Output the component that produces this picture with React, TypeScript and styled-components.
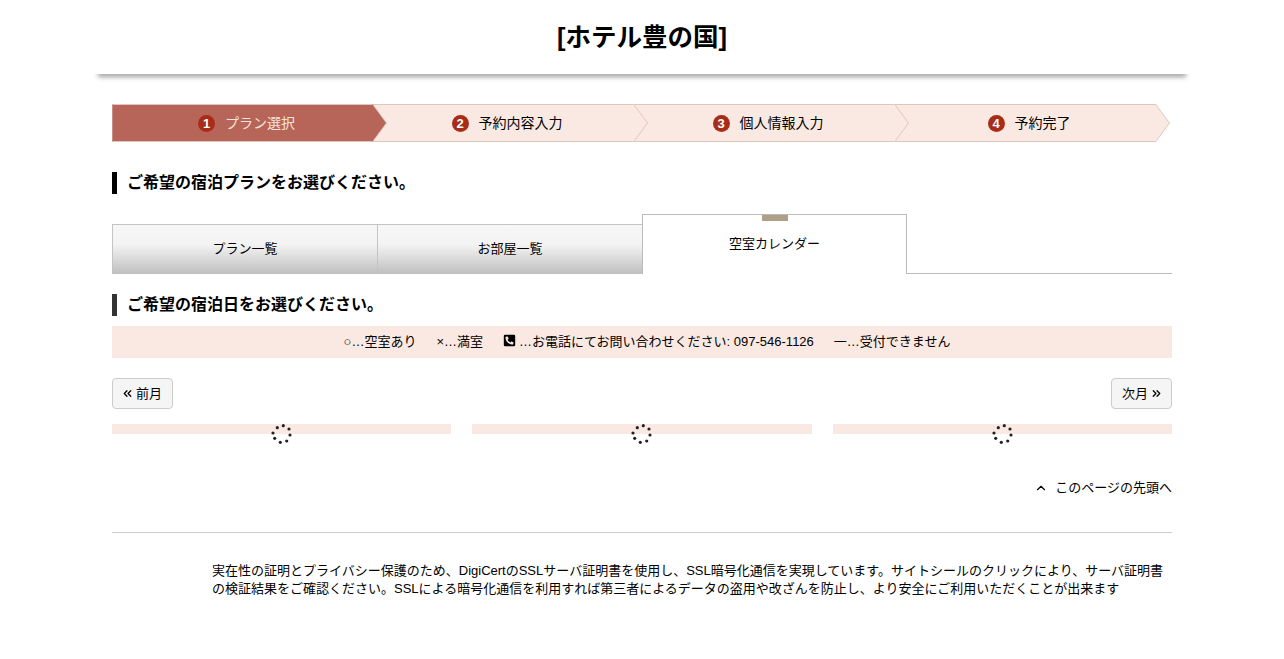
import styled, { createGlobalStyle } from "styled-components";
import { ChevronsLeft, ChevronsRight, ChevronUp } from "lucide-react";
import { FaPhoneSquareAlt } from "react-icons/fa";

const GlobalStyle = createGlobalStyle`
	html, body {
		margin: 0;
		padding: 0;
		background: #fff;
		color: #000;
		font-family: "Liberation Sans", Arial, "Noto Sans CJK JP", sans-serif;
		font-size: 13px;
	}
`;

const Header = styled.header`
	position: relative;
	box-sizing: border-box;
	width: 1092px;
	height: 74px;
	margin: 0 auto;
	padding-bottom: 6px;
	display: flex;
	align-items: center;
	justify-content: center;

	&::after {
		content: "";
		position: absolute;
		left: 2px;
		right: 2px;
		bottom: 0;
		height: 6px;
		box-shadow: 0 3px 5px 0 rgba(0, 0, 0, 0.38);
		clip-path: inset(6px -10px -10px -10px);
	}
`;

const Title = styled.h1`
	margin: 0;
	font-size: 25.5px;
	font-weight: bold;
`;

const Main = styled.main`
	width: 1060px;
	margin: 0 auto;
	padding-top: 30px;
`;

const Steps = styled.ol`
	display: flex;
	list-style: none;
	margin: 0 0 30px;
	padding: 0;
`;

const Step = styled.li<{ $active?: boolean; $layer: number }>`
	position: relative;
	z-index: ${(p) => p.$layer};
	box-sizing: border-box;
	width: 261px;
	height: 38px;
	padding: 0 0 2px 7px;
	display: flex;
	align-items: center;
	justify-content: center;
	gap: 10px;
	font-size: 14px;
	color: ${(p) => (p.$active ? "#f6e4dc" : "#000")};
	background: ${(p) => (p.$active ? "#b66558" : "#fae9e2")};
	border-top: 1px solid #e2c6bc;
	border-bottom: 1px solid #e2c6bc;
	border-left: ${(p) => (p.$active ? "1px solid #c98d82" : "none")};

	&::before,
	&::after {
		content: "";
		position: absolute;
		top: -1px;
		height: 38px;
		width: 14px;
		clip-path: polygon(0 0, 100% 50%, 0 100%);
	}
	&::before {
		right: -14px;
		background: #e2c6bc;
	}
	&::after {
		right: -13px;
		background: ${(p) => (p.$active ? "#b66558" : "#fae9e2")};
	}
`;

const StepNumber = styled.span`
	width: 17px;
	height: 17px;
	margin-top: 2px;
	border-radius: 50%;
	background: #a82c17;
	color: #fff;
	font-size: 13px;
	font-weight: bold;
	line-height: 17px;
	text-align: center;
`;

const SectionTitle = styled.h2<{ $soft?: boolean }>`
	margin: 0;
	height: 22px;
	padding-left: 10px;
	border-left: 5px solid ${(p) => (p.$soft ? "#333" : "#000")};
	font-size: 16px;
	font-weight: bold;
	line-height: 22px;
`;

const Tabs = styled.div`
	display: flex;
	align-items: flex-end;
	height: 59px;
	margin: 20px 0;
	border-bottom: 1px solid #bbb;
`;

const Tab = styled.div`
	box-sizing: border-box;
	width: 265px;
	height: 50px;
	margin-bottom: -1px;
	padding-bottom: 4px;
	display: flex;
	align-items: center;
	justify-content: center;
	background: linear-gradient(#f7f7f7 0%, #f3f3f3 40%, #bfbfbf 100%);
	border: 1px solid #c4c4c4;
	border-bottom: none;
	border-right: none;
`;

const ActiveTab = styled.div`
	position: relative;
	box-sizing: border-box;
	width: 265px;
	height: 60px;
	margin-bottom: -1px;
	padding-bottom: 4px;
	display: flex;
	align-items: center;
	justify-content: center;
	background: #fff;
	border: 1px solid #bbb;
	border-bottom: none;

	&::before {
		content: "";
		position: absolute;
		top: 0;
		left: 119px;
		width: 26px;
		height: 6px;
		background: #b09f88;
	}
`;

const Legend = styled.div`
	box-sizing: border-box;
	height: 32px;
	margin-top: 10px;
	padding: 0 0 4px 10px;
	display: flex;
	align-items: center;
	justify-content: center;
	gap: 20px;
	background: #fae9e2;
`;

const LegendItem = styled.span`
	display: inline-flex;
	align-items: center;
	gap: 3px;
`;

const Pager = styled.div`
	display: flex;
	justify-content: space-between;
	margin-top: 20px;
`;

const PagerButton = styled.button<{ $next?: boolean }>`
	box-sizing: border-box;
	height: 31px;
	width: 61px;
	display: inline-flex;
	align-items: center;
	justify-content: ${(p) => (p.$next ? "flex-end" : "flex-start")};
	gap: 2px;
	padding: 0 8px 2px;
	background: #f5f5f5;
	border: 1px solid #ccc;
	border-radius: 4px;
	color: #000;
	font: inherit;

	svg {
		margin-top: 2px;
	}
`;

const Calendars = styled.div`
	display: grid;
	grid-template-columns: repeat(3, 1fr);
	column-gap: 21px;
	margin-top: 15px;
`;

const CalendarBar = styled.div`
	position: relative;
	height: 10px;
	background: #fae9e2;
`;

const Spinner = styled.svg`
	position: absolute;
	left: 50%;
	top: 0;
	width: 24px;
	height: 20px;
	margin-left: -11.5px;
	overflow: visible;
`;

const TopLink = styled.div`
	box-sizing: border-box;
	display: flex;
	justify-content: flex-end;
	align-items: center;
	gap: 7px;
	margin-top: 45px;
	height: 16px;
	padding-bottom: 1px;

	svg {
		margin-top: 2px;
	}
`;

const Divider = styled.hr`
	margin: 37px 0 0;
	border: none;
	border-top: 1px solid #ccc;
`;

const Notice = styled.p`
	margin: 29px 0 0;
	padding-left: 100px;
	line-height: 18px;
`;

const steps = ["プラン選択", "予約内容入力", "個人情報入力", "予約完了"];
const dots = [
	[7.3, 3.7], [13.3, 1.7], [19, 5], [20, 11], [16.7, 17], [10.3, 18.3], [4.7, 14.3], [3, 9],
];

function Loader() {
	return (
		<Spinner viewBox="0 0 24 20">
			{dots.map(([cx, cy]) => (
				<circle key={cx} cx={cx} cy={cy} r="1.6" fill="#222" />
			))}
		</Spinner>
	);
}

export default function App() {
	return (
		<>
			<GlobalStyle />
			<Header>
				<Title>[ホテル豊の国]</Title>
			</Header>
			<Main>
				<Steps>
					{steps.map((step, index) => (
						<Step key={step} $active={index === 0} $layer={4 - index}>
							<StepNumber>{index + 1}</StepNumber>
							{step}
						</Step>
					))}
				</Steps>
				<SectionTitle>ご希望の宿泊プランをお選びください。</SectionTitle>
				<Tabs>
					<Tab>プラン一覧</Tab>
					<Tab>お部屋一覧</Tab>
					<ActiveTab>空室カレンダー</ActiveTab>
				</Tabs>
				<SectionTitle $soft>ご希望の宿泊日をお選びください。</SectionTitle>
				<Legend>
					<LegendItem>○…空室あり</LegendItem>
					<LegendItem>×…満室</LegendItem>
					<LegendItem>
						<FaPhoneSquareAlt size={13} /> …お電話にてお問い合わせください: 097-546-1126
					</LegendItem>
					<LegendItem>一…受付できません</LegendItem>
				</Legend>
				<Pager>
					<PagerButton>
						<ChevronsLeft size={13} strokeWidth={2.4} />
						前月
					</PagerButton>
					<PagerButton $next>
						次月
						<ChevronsRight size={13} strokeWidth={2.4} />
					</PagerButton>
				</Pager>
				<Calendars>
					<CalendarBar><Loader /></CalendarBar>
					<CalendarBar><Loader /></CalendarBar>
					<CalendarBar><Loader /></CalendarBar>
				</Calendars>
				<TopLink>
					<ChevronUp size={14} strokeWidth={2} />
					このページの先頭へ
				</TopLink>
				<Divider />
				<Notice>
					実在性の証明とプライバシー保護のため、DigiCertのSSLサーバ証明書を使用し、SSL暗号化通信を実現しています。サイトシールのクリックにより、サーバ証明書の検証結果をご確認ください。SSLによる暗号化通信を利用すれば第三者によるデータの盗用や改ざんを防止し、より安全にご利用いただくことが出来ます
				</Notice>
			</Main>
		</>
	);
}
